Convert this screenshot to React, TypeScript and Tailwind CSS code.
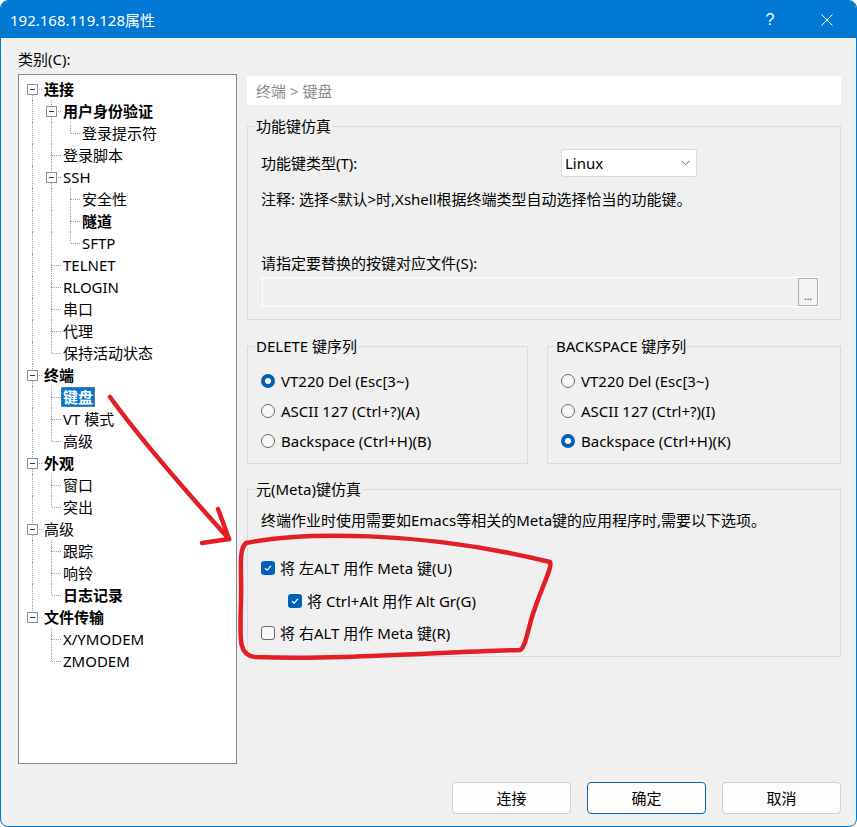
import React from 'react';

type Item = { label: string; level: number; bold?: boolean; kids?: boolean; selected?: boolean };

const ITEMS: Item[] = [
  { label: '连接', level: 0, bold: true, kids: true },
  { label: '用户身份验证', level: 1, bold: true, kids: true },
  { label: '登录提示符', level: 2 },
  { label: '登录脚本', level: 1 },
  { label: 'SSH', level: 1, kids: true },
  { label: '安全性', level: 2 },
  { label: '隧道', level: 2, bold: true },
  { label: 'SFTP', level: 2 },
  { label: 'TELNET', level: 1 },
  { label: 'RLOGIN', level: 1 },
  { label: '串口', level: 1 },
  { label: '代理', level: 1 },
  { label: '保持活动状态', level: 1 },
  { label: '终端', level: 0, bold: true, kids: true },
  { label: '键盘', level: 1, bold: true, selected: true },
  { label: 'VT 模式', level: 1 },
  { label: '高级', level: 1 },
  { label: '外观', level: 0, bold: true, kids: true },
  { label: '窗口', level: 1 },
  { label: '突出', level: 1 },
  { label: '高级', level: 0, kids: true },
  { label: '跟踪', level: 1 },
  { label: '响铃', level: 1 },
  { label: '日志记录', level: 1, bold: true },
  { label: '文件传输', level: 0, bold: true, kids: true },
  { label: 'X/YMODEM', level: 1 },
  { label: 'ZMODEM', level: 1 },
];

// true if another item at this depth follows before the branch closes
const continues = (i: number, lvl: number) => {
  for (let j = i + 1; j < ITEMS.length; j++) {
    if (ITEMS[j].level < lvl) return false;
    if (ITEMS[j].level === lvl) return true;
  }
  return false;
};

function TreeRow({ item, index }: { item: Item; index: number }) {
  const cols = [];
  for (let d = 0; d < item.level; d++) {
    cols.push(
      <div key={d} className="relative w-[19px] h-[22px] shrink-0">
        {continues(index, d) && (
          <div className="absolute left-[9px] top-0 bottom-0 border-l border-dotted border-[#a0a0a0]" />
        )}
      </div>
    );
  }
  const more = continues(index, item.level);
  return (
    <div className="flex items-center h-[22px] pl-[4px]">
      {cols}
      <div className="relative w-[19px] h-[22px] shrink-0">
        {index > 0 && <div className="absolute left-[9px] top-0 h-[11px] border-l border-dotted border-[#a0a0a0]" />}
        {more && <div className="absolute left-[9px] top-[11px] bottom-0 border-l border-dotted border-[#a0a0a0]" />}
        <div className="absolute left-[10px] right-0 top-[11px] border-t border-dotted border-[#a0a0a0]" />
        {item.kids && (
          <div className="absolute left-[4px] top-[6px] w-[11px] h-[11px] border border-[#8f8f8f] bg-white flex items-center justify-center">
            <div className="w-[5px] h-[1px] bg-[#1e3a6e]" />
          </div>
        )}
      </div>
      <span
        className={
          'px-[2px] leading-[20px] whitespace-nowrap ' +
          (item.bold ? 'font-bold ' : '') +
          (item.selected ? 'bg-[#0078d7] text-white outline outline-1 outline-dotted outline-[#c08040] -outline-offset-1' : '')
        }
      >
        {item.label}
      </span>
    </div>
  );
}

function Radio({ checked, label }: { checked?: boolean; label: string }) {
  return (
    <div className="flex items-center h-[20px]">
      {checked ? (
        <div className="w-[14px] h-[14px] rounded-full bg-[#005fb8] flex items-center justify-center">
          <div className="w-[6px] h-[6px] rounded-full bg-white" />
        </div>
      ) : (
        <div className="w-[14px] h-[14px] rounded-full border border-[#6a6a6a] bg-[#f7f7f7]" />
      )}
      <span className="ml-[6px] whitespace-nowrap">{label}</span>
    </div>
  );
}

function Check({ checked, label, indent }: { checked?: boolean; label: string; indent?: boolean }) {
  return (
    <div className={'flex items-center h-[20px] ' + (indent ? 'ml-[27px]' : '')}>
      {checked ? (
        <div className="w-[14px] h-[14px] rounded-[3px] bg-[#005fb8] flex items-center justify-center">
          <svg width="10" height="10" viewBox="0 0 10 10">
            <path d="M2 5.2 L4.1 7.2 L8 2.8" fill="none" stroke="white" strokeWidth="1.2" />
          </svg>
        </div>
      ) : (
        <div className="w-[14px] h-[14px] rounded-[3px] border border-[#6a6a6a] bg-[#f7f7f7]" />
      )}
      <span className="ml-[5px] whitespace-nowrap">{label}</span>
    </div>
  );
}

function Group({ title, className, children }: { title: string; className?: string; children: React.ReactNode }) {
  return (
    <fieldset className={'border border-[#dcdcdc] ' + (className ?? '')}>
      <legend className="ml-[7px] px-[1px] leading-[20px]">{title}</legend>
      {children}
    </fieldset>
  );
}

function Annotation() {
  return (
    <svg className="absolute inset-0 pointer-events-none" width="857" height="827" viewBox="0 0 857 827">
      <g fill="none" stroke="#e31e24" strokeWidth="4.5" strokeLinecap="round" strokeLinejoin="round">
        <path d="M110 397 Q 146 447 229 539" />
        <path d="M218 509 L229 539" />
        <path d="M202 543 L229 539" />
        <path d="M246 543 C 300 532, 420 530, 550 562 C 553 567, 540 590, 531 620 C 526 640, 524 648, 520 650 C 440 652, 340 660, 255 657 C 238 655, 240 640, 241 600 C 242 570, 238 550, 246 543" />
      </g>
    </svg>
  );
}

export default function App() {
  return (
    <div className="relative w-[857px] h-[827px] bg-white font-['Noto_Sans','Noto_Sans_CJK_SC',sans-serif] text-[15px] leading-[20px] text-black">
      <div className="flex flex-col w-full h-full border border-[#0078d4] rounded-[8px] overflow-hidden bg-[#f0f0f0]">
        {/* Title bar */}
        <div className="h-[37px] bg-[#0078d4] text-white flex items-center pl-[9px] pr-[19px] shrink-0">
          <span>192.168.119.128属性</span>
          <span className="ml-auto w-[20px] text-center font-['Liberation_Sans',sans-serif] font-light text-[16px]">?</span>
          <div className="ml-[37px] w-[20px] flex justify-center">
            <svg width="12" height="12" viewBox="0 0 12 12">
              <path d="M0.5 0.5 L11.5 11.5 M11.5 0.5 L0.5 11.5" stroke="white" strokeWidth="1" />
            </svg>
          </div>
        </div>

        <div className="flex flex-col pl-[17px] pr-[15px] pt-[11px]">
          <div>类别(C):</div>
          <div className="flex mt-[5px]">
            {/* Category tree */}
            <div className="w-[219px] h-[690px] border border-[#828790] bg-white pt-[3px] shrink-0">
              {ITEMS.map((item, i) => (
                <TreeRow key={i} item={item} index={i} />
              ))}
            </div>

            {/* Right panel */}
            <div className="ml-[10px] mt-[2px] w-[594px] flex flex-col">
              <div className="h-[29px] bg-white pl-[9px] flex items-center text-[#8c8c8c]">终端 &gt; 键盘</div>

              <Group title="功能键仿真" className="mt-[11px]">
                <div className="pl-[13px] pb-[12px]">
                  <div className="mt-[13px] flex items-center h-[28px]">
                    <span className="w-[300px]">功能键类型(T):</span>
                    <div className="w-[136px] h-[28px] bg-white border border-[#dadada] rounded-[2px] flex items-center pl-[3px] pr-[6px]">
                      <span>Linux</span>
                      <svg className="ml-auto" width="9" height="6" viewBox="0 0 9 6">
                        <path d="M0.5 0.8 L4.5 4.8 L8.5 0.8" fill="none" stroke="#606060" strokeWidth="1" />
                      </svg>
                    </div>
                  </div>
                  <div className="mt-[12px] whitespace-nowrap">注释: 选择&lt;默认&gt;时,Xshell根据终端类型自动选择恰当的功能键。</div>
                  <div className="mt-[44px]">请指定要替换的按键对应文件(S):</div>
                  <div className="mt-[4px] ml-[1px] w-[557px] h-[30px] flex border border-white bg-[#f0f0f0]">
                    <div className="flex-1" />
                    <div className="w-[20px] h-full border border-[#adadad] bg-[#f4f4f4] flex items-end justify-center pb-[4px] text-[10px] leading-[10px] text-[#333]">
                      ...
                    </div>
                  </div>
                </div>
              </Group>

              <div className="flex justify-between mt-[16px]">
                <Group title="DELETE 键序列" className="w-[281px]">
                  <div className="pl-[13px] pt-[15px] pb-[12px] flex flex-col gap-[10px]">
                    <Radio checked label="VT220 Del (Esc[3~)" />
                    <Radio label="ASCII 127 (Ctrl+?)(A)" />
                    <Radio label="Backspace (Ctrl+H)(B)" />
                  </div>
                </Group>
                <Group title="BACKSPACE 键序列" className="w-[294px]">
                  <div className="pl-[13px] pt-[15px] pb-[12px] flex flex-col gap-[10px]">
                    <Radio label="VT220 Del (Esc[3~)" />
                    <Radio label="ASCII 127 (Ctrl+?)(I)" />
                    <Radio checked label="Backspace (Ctrl+H)(K)" />
                  </div>
                </Group>
              </div>

              <Group title="元(Meta)键仿真" className="mt-[15px]">
                <div className="pl-[13px] pb-[13px]">
                  <div className="mt-[11px] whitespace-nowrap">终端作业时使用需要如Emacs等相关的Meta键的应用程序时,需要以下选项。</div>
                  <div className="mt-[28px]">
                    <Check checked label="将 左ALT 用作 Meta 键(U)" />
                  </div>
                  <div className="mt-[13px]">
                    <Check checked indent label="将 Ctrl+Alt 用作 Alt Gr(G)" />
                  </div>
                  <div className="mt-[12px]">
                    <Check label="将 右ALT 用作 Meta 键(R)" />
                  </div>
                </div>
              </Group>
            </div>
          </div>

          {/* Dialog buttons */}
          <div className="flex justify-end gap-[16px] mt-[18px]">
            <button className="w-[119px] h-[32px] rounded-[4px] border border-[#d0d0d0] bg-[#fdfdfd]">连接</button>
            <button className="w-[119px] h-[32px] rounded-[4px] border border-[#0067c0] bg-[#fdfdfd]">确定</button>
            <button className="w-[119px] h-[32px] rounded-[4px] border border-[#d0d0d0] bg-[#fdfdfd]">取消</button>
          </div>
        </div>
      </div>
      <Annotation />
    </div>
  );
}
